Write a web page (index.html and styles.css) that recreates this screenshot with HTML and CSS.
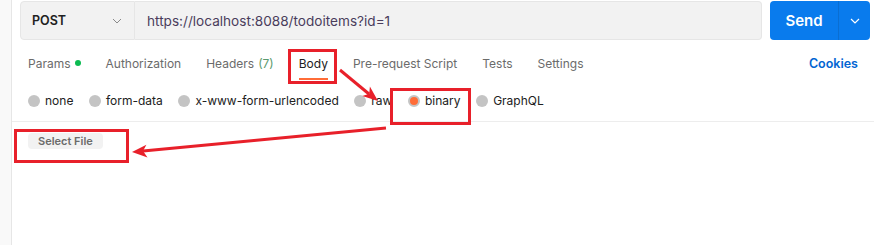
FILE: index.html
```html
<!DOCTYPE html>
<html lang="en">
<head>
    <meta charset="UTF-8">
    <title>Request - Body</title>
    <link rel="stylesheet" href="styles.css">
</head>
<body>
    <div class="app">
        <div class="sidebar"></div>
        <div class="main">
            <div class="url-bar">
                <div class="method">
                    <span>POST</span>
                    <svg class="chev" width="10" height="6" viewBox="0 0 10 6"><path d="M1 1l4 4 4-4" fill="none" stroke="#8a8a8a" stroke-width="1"/></svg>
                </div>
                <div class="url">https://localhost:8088/todoitems?id=1</div>
                <div class="send">
                    <span class="send-label">Send</span>
                    <span class="send-more">
                        <svg width="10" height="6" viewBox="0 0 10 6"><path d="M1 1l4 4 4-4" fill="none" stroke="#fff" stroke-width="1.2"/></svg>
                    </span>
                </div>
            </div>

            <div class="tabs">
                <span class="tab">Params <i class="dot"></i></span>
                <span class="tab">Authorization</span>
                <span class="tab">Headers <em>(7)</em></span>
                <span class="tab active">Body</span>
                <span class="tab">Pre-request Script</span>
                <span class="tab">Tests</span>
                <span class="tab">Settings</span>
                <span class="cookies">Cookies</span>
            </div>

            <div class="body-types">
                <label class="radio"><i></i>none</label>
                <label class="radio"><i></i>form-data</label>
                <label class="radio"><i></i>x-www-form-urlencoded</label>
                <label class="radio"><i></i>raw</label>
                <label class="radio checked"><i></i>binary</label>
                <label class="radio"><i></i>GraphQL</label>
            </div>

            <div class="file-area">
                <button class="select-file">Select File</button>
            </div>
        </div>
    </div>

    <!-- annotations drawn over the screenshot -->
    <svg class="notes" width="874" height="245" viewBox="0 0 874 245">
        <g fill="none" stroke="#e8202a" stroke-width="3">
            <rect x="289.5" y="50.5" width="46" height="32"/>
            <rect x="391.5" y="89.5" width="78" height="34"/>
            <rect x="15.5" y="130.5" width="112" height="31"/>
            <line x1="340" y1="70" x2="369" y2="94"/>
            <line x1="386" y1="128" x2="143" y2="151"/>
        </g>
        <g fill="#e8202a">
            <polygon points="378,101 362.3,95.9 369.2,93.7 369.9,86.5"/>
            <polygon points="132,152 146.4,144.7 143,151 147.5,157.6"/>
        </g>
    </svg>
</body>
</html>
```

FILE: styles.css
```css
body {
    margin: 0;
    background: #fff;
    font-family: Inter, "Noto Sans", sans-serif;
    font-size: 12px;
    color: #212121;
}
.app {
    display: flex;
    height: 245px;
}
.sidebar {
    width: 11px;
    background: #f9f9f9;
    border-right: 1px solid #e6e6e6;
}
.main {
    flex: 1;
    display: flex;
    flex-direction: column;
}
.url-bar {
    display: flex;
    height: 39px;
    margin: 1px 4px 0 8px;
}
.method {
    width: 115px;
    box-sizing: border-box;
    display: flex;
    align-items: center;
    justify-content: space-between;
    padding: 0 12px 0 11px;
    background: #f2f2f2;
    border: 1px solid #e6e6e6;
    border-radius: 4px 0 0 4px;
    font-size: 12.5px;
    font-weight: 600;
    color: #212121;
}
.url {
    flex: 1;
    display: flex;
    align-items: center;
    padding-left: 12px;
    background: #f2f2f2;
    border: 1px solid #e6e6e6;
    border-left: none;
    border-radius: 0 4px 4px 0;
    font-size: 13.6px;
    color: #4a3d5c;
}
.send {
    display: flex;
    width: 100px;
    margin-left: 8px;
    background: #097bed;
    border-radius: 4px;
    color: #fff;
}
.send-label {
    width: 68px;
    display: flex;
    align-items: center;
    justify-content: center;
    font-size: 15px;
    font-weight: 600;
    border-right: 1px solid #0a6ed2;
}
.send-more {
    flex: 1;
    display: flex;
    align-items: center;
    justify-content: center;
}
.tabs {
    display: flex;
    align-items: stretch;
    height: 32px;
    margin-top: 8px;
    padding: 0 16px;
}
.tab {
    display: flex;
    align-items: center;
    margin-right: 25px;
    color: #6b6b6b;
    border-bottom: 2px solid transparent;
}
.tab em {
    font-style: normal;
    color: #5a9a6e;
    margin-left: 4px;
}
.tab.active {
    color: #212121;
    border-bottom-color: #ff6c37;
}
.dot {
    width: 6px;
    height: 6px;
    border-radius: 50%;
    background: #0cbb52;
    margin-left: 4px;
}
.cookies {
    margin-left: auto;
    display: flex;
    align-items: center;
    padding-bottom: 2px;
    color: #0265d2;
    font-size: 12.5px;
    font-weight: 600;
}
.body-types {
    display: flex;
    align-items: center;
    height: 41px;
    padding: 0 16px;
    border-bottom: 1px solid #ededed;
}
.radio {
    display: flex;
    align-items: center;
    margin-right: 15.6px;
    color: #212121;
}
.radio i {
    width: 12px;
    height: 12px;
    border-radius: 50%;
    background: #c4c4c4;
    margin-right: 5px;
    box-sizing: border-box;
}
.radio.checked i {
    background: #ff6c37;
    border: 2px solid #c4c4c4;
}
.file-area {
    padding: 11px 16px;
}
.select-file {
    height: 16px;
    padding: 0 10px;
    border: none;
    border-radius: 4px;
    background: #f2f2f2;
    font-family: inherit;
    font-size: 11px;
    font-weight: 600;
    color: #6b6b6b;
}
.notes {
    position: absolute;
    left: 0;
    top: 0;
    pointer-events: none;
}
```
